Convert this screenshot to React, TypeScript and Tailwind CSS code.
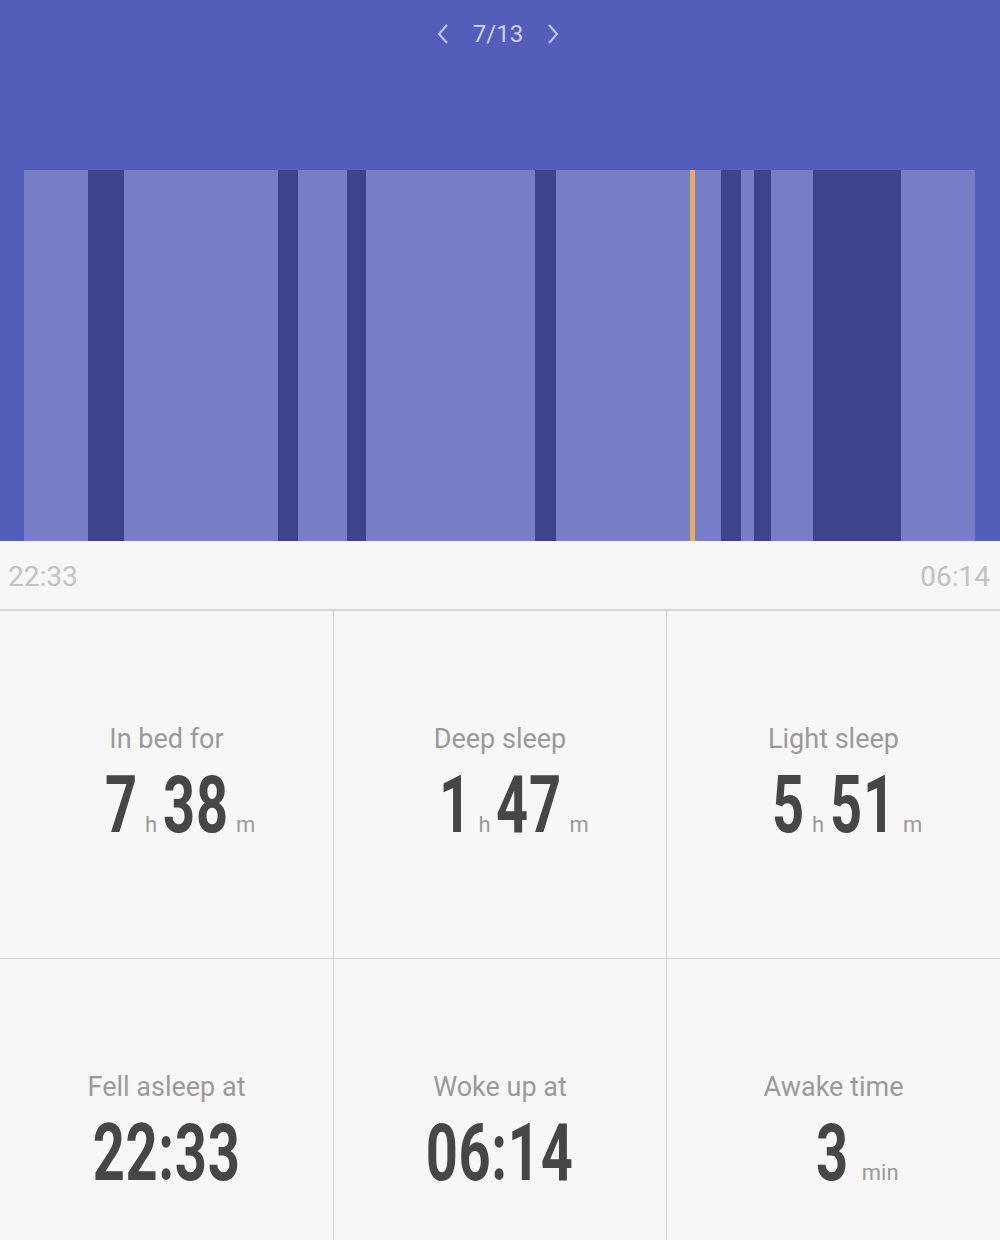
import React from "react";

const LIGHT = "bg-[#787ec6]";
const DARK = "bg-[#3d448b]";
const ORANGE = "bg-[#e6ad5e]";

// sleep stages across the night, widths in px (chart is 951px wide)
const segments: { w: number; c: string }[] = [
  { w: 64, c: LIGHT },
  { w: 36, c: DARK },
  { w: 154, c: LIGHT },
  { w: 20, c: DARK },
  { w: 49, c: LIGHT },
  { w: 19, c: DARK },
  { w: 169, c: LIGHT },
  { w: 21, c: DARK },
  { w: 134, c: LIGHT },
  { w: 5, c: ORANGE },
  { w: 26, c: LIGHT },
  { w: 20, c: DARK },
  { w: 13, c: LIGHT },
  { w: 17, c: DARK },
  { w: 42, c: LIGHT },
  { w: 88, c: DARK },
  { w: 74, c: LIGHT },
];

const font = { fontFamily: "Roboto, 'Noto Sans', sans-serif" };

// condensed look: Roboto bold squeezed horizontally
function Big({ text }: { text: string }) {
  const w = [...text].reduce((s, ch) => s + (ch === ":" ? 0.36 : 0.562) * 80 * 0.72, 0);
  return (
    <span className="inline-flex justify-center" style={{ width: w }}>
      <span className="inline-block shrink-0 scale-x-[0.7] text-[80px] font-bold leading-none tracking-[1px] text-[#464646]">
        {text}
      </span>
    </span>
  );
}

function Unit({ children, gap = "ml-[7px] mr-[6px]" }: { children: React.ReactNode; gap?: string }) {
  return <span className={`${gap} text-[22px] leading-none text-[#9a9a9a]`}>{children}</span>;
}

function Cell({
  label,
  children,
  border,
  shift = "pl-0",
}: {
  label: string;
  children: React.ReactNode;
  border?: boolean;
  shift?: string;
}) {
  return (
    <div className={`flex h-[347px] flex-col items-center pt-[110px] ${border ? "border-l border-[#d2d2d2]" : ""}`}>
      <div className="text-[27px] leading-[36px] text-[#9a9a9a]">{label}</div>
      <div className={`mt-[8px] flex items-baseline justify-center ${shift}`}>{children}</div>
    </div>
  );
}

export default function App() {
  return (
    <div className="h-[1240px] w-[1000px] overflow-hidden bg-[#f7f7f7]" style={font}>
      <div className="bg-[#535ebb]">
        <div className="flex h-[68px] items-center justify-center gap-[22px] text-[#cdd1f0]">
          <svg width="16" height="24" viewBox="0 0 16 24" fill="none" className="-ml-[4px]">
            <polyline points="12,3 4,12 12,21" stroke="#c3c7ec" strokeWidth="2" />
          </svg>
          <span className="text-[24px] leading-none">7/13</span>
          <svg width="16" height="24" viewBox="0 0 16 24" fill="none">
            <polyline points="4,3 12,12 4,21" stroke="#c3c7ec" strokeWidth="2" />
          </svg>
        </div>
        <div className="ml-[24px] mt-[102px] flex h-[371px] w-[951px]">
          {segments.map((s, i) => (
            <div key={i} className={`h-full shrink-0 ${s.c}`} style={{ width: s.w }} />
          ))}
        </div>
      </div>

      <div className="flex h-[70px] items-center justify-between border-b-2 border-[#d6d6d6] pl-[8px] pr-[10px] pt-[4px] text-[28px] text-[#c2c2c2]">
        <span>22:33</span>
        <span>06:14</span>
      </div>

      <div className="grid grid-cols-[333px_333px_334px]">
        <Cell label="In bed for" shift="pl-[28px]">
          <Big text="7" />
          <Unit>h</Unit>
          <Big text="38" />
          <Unit gap="ml-[8px]">m</Unit>
        </Cell>
        <Cell label="Deep sleep" border shift="pl-[28px]">
          <Big text="1" />
          <Unit>h</Unit>
          <Big text="47" />
          <Unit gap="ml-[8px]">m</Unit>
        </Cell>
        <Cell label="Light sleep" border shift="pl-[28px]">
          <Big text="5" />
          <Unit>h</Unit>
          <Big text="51" />
          <Unit gap="ml-[8px]">m</Unit>
        </Cell>
      </div>
      <div className="grid grid-cols-[333px_333px_334px] border-t border-[#d2d2d2]">
        <Cell label="Fell asleep at">
          <Big text="22:33" />
        </Cell>
        <Cell label="Woke up at" border>
          <Big text="06:14" />
        </Cell>
        <Cell label="Awake time" border shift="pl-[48px]">
          <Big text="3" />
          <Unit gap="ml-[13px]">min</Unit>
        </Cell>
      </div>
    </div>
  );
}
